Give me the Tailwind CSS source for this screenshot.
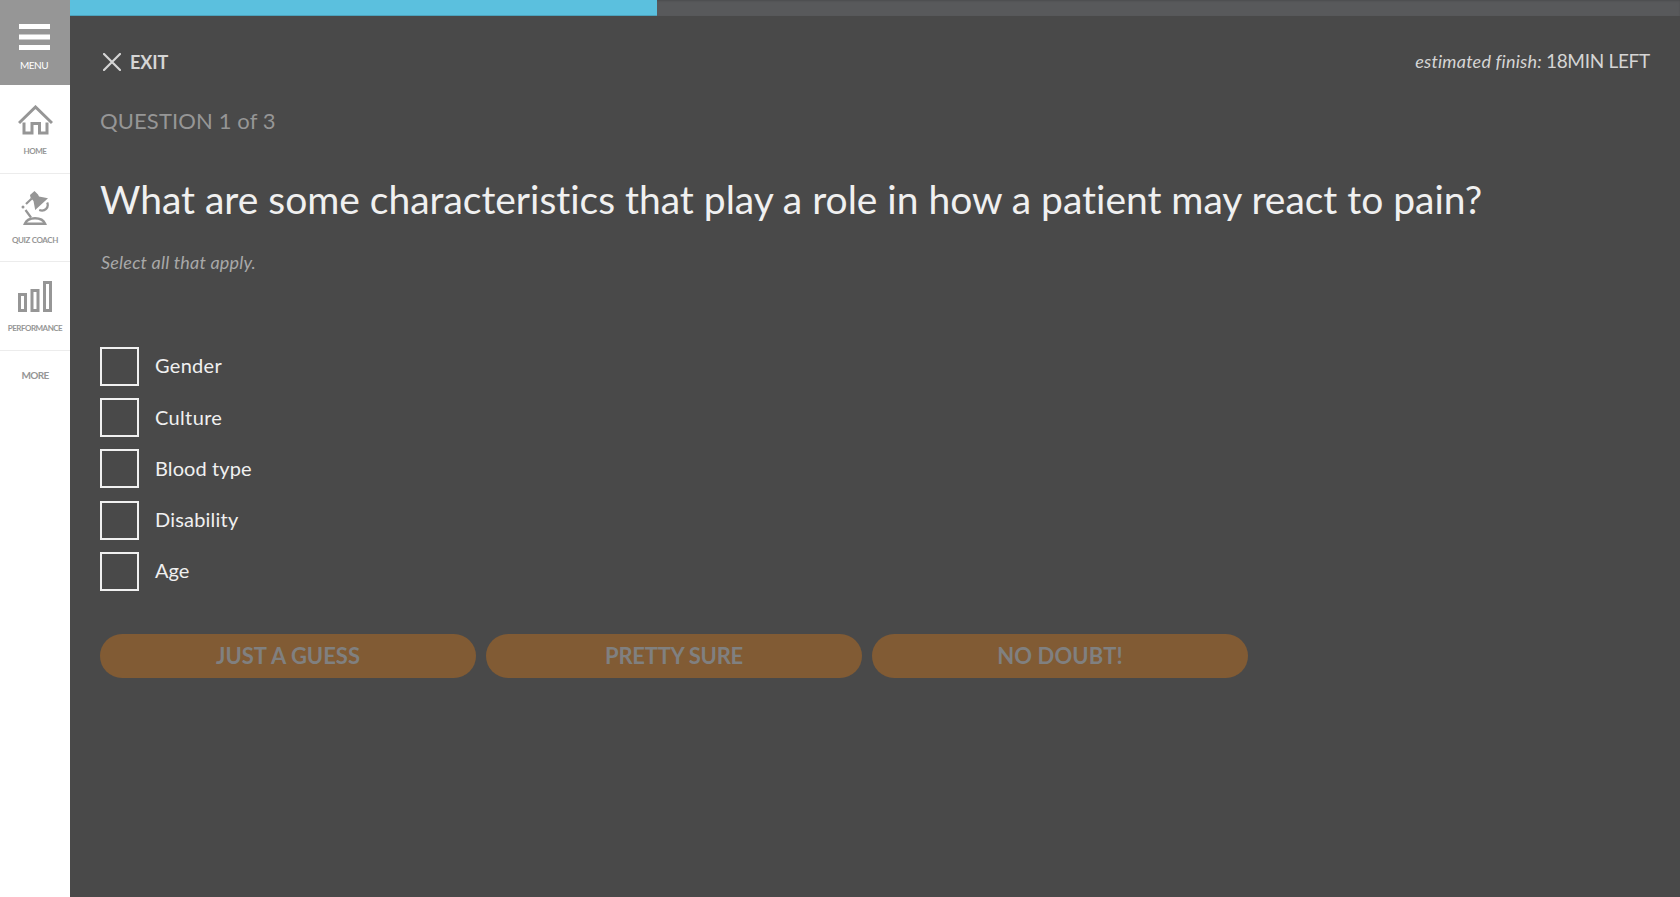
<!DOCTYPE html>
<html lang="en">
<head>
<meta charset="utf-8">
<title>Quiz</title>
<script src="https://cdn.jsdelivr.net/npm/@tailwindcss/browser@4"></script>
</head>
<body class="flex h-screen overflow-hidden bg-[#494949] font-['Lato',sans-serif] text-[#f0f0f0]">
  <nav class="flex w-[70px] shrink-0 flex-col bg-white text-center font-bold text-[#969696]">
    <a class="flex h-[85px] flex-col items-center bg-[#969696] pt-6 font-normal text-white">
      <svg class="-ml-px h-[26px] w-[31px]" viewBox="0 0 31 26" fill="currentColor"><path d="M0 0h31v5H0zM0 10.5h31v5H0zM0 21h31v5H0z"/></svg>
      <span class="-ml-0.5 mt-[9px] text-[10px] leading-3 tracking-[-0.5px]">MENU</span>
    </a>
    <a class="flex h-[89px] flex-col items-center border-b border-[#ececec] pt-5">
      <svg class="h-[30px] w-[35px]" viewBox="0 0 35 30" fill="none" stroke="currentColor" stroke-width="3"><path d="M1 18 17.5 2 34 18" /><path d="M6 17.5V28h8V18.500h7.500V28H29V17.500"/></svg>
      <span class="mt-[10px] text-[8px] leading-3 tracking-[-0.5px]">HOME</span>
    </a>
    <a class="flex h-[88px] flex-col items-center border-b border-[#ececec] pt-4">
      <svg class="h-[36px] w-[30px]" viewBox="0 0 30 36" fill="currentColor"><path d="M14.500 1 18 4.500 19 6.500 28 8.200 15.200 20 13.500 11 10.500 7.500 10 5z"/><g fill="none" stroke="currentColor" stroke-width="2.200"><path d="M11.800 8.500 6 14M5.500 20l5.500 7.500M27.200 12.500c2 5-2.200 9.500-8 7.500"/><path d="M5 33.700C8 26.500 22 26.500 25 33.700z" stroke-width="2.600"/></g><circle cx="3" cy="17" r="1.500"/></svg>
      <span class="mt-[8px] text-[8px] leading-3 tracking-[-0.38px]">QUIZ COACH</span>
    </a>
    <a class="flex h-[89px] flex-col items-center border-b border-[#ececec] pt-[19px]">
      <svg class="h-[31px] w-[34px]" viewBox="0 0 34 31" fill="none" stroke="currentColor" stroke-width="3"><path d="M1.500 13.500h6v16h-6zM14 9.500h6v20h-6zM26.500 1.500h6v28h-6z"/></svg>
      <span class="mt-[10px] text-[8px] leading-3 tracking-[-0.5px]">PERFORMANCE</span>
    </a>
    <a class="pt-[18px] text-[10px] leading-3 tracking-[-0.7px]">MORE</a>
  </nav>
  <main class="flex grow flex-col">
    <div class="h-4 bg-[#58595b] shadow-[inset_0_1px_2px_rgba(0,0,0,0.15)]">
      <div class="h-full w-[587px] bg-[#5bc0de] shadow-[inset_0_-1px_0_rgba(0,0,0,0.15)]"></div>
    </div>
    <div class="flex flex-col px-[30px]">
      <header class="mt-[34px] flex h-6 items-center justify-between text-[#d5d5d5]">
        <div class="flex items-center gap-[9px] pl-[3px]">
          <svg class="size-[18px]" viewBox="0 0 18 18" fill="none" stroke="currentColor" stroke-width="2.200" stroke-linecap="round"><path d="M1 1l16 16M17 1 1 17"/></svg>
          <span class="text-[18px] leading-6 font-bold tracking-[-0.1px]">EXIT</span>
        </div>
        <div class="flex items-baseline gap-1 pb-[2px] leading-6"><em class="text-[18px] tracking-[0.22px]">estimated finish:</em><span class="text-[19px] tracking-[-0.3px]">18MIN LEFT</span></div>
      </header>
      <div class="mt-[33px] text-[22px] leading-7 tracking-[0.12px] text-[#969696]">QUESTION 1 of 3</div>
      <h1 class="mt-10 text-[39px] leading-12 tracking-[-0.015px] whitespace-nowrap">What are some characteristics that play a role in how a patient may react to pain?</h1>
      <p class="mt-[27px] pl-px text-[18px] leading-6 tracking-[0.2px] text-[#a8a8a8] italic">Select all that apply.</p>
      <div class="mt-[73px] flex flex-col gap-[12.2px] text-[20px] leading-6">
        <label class="flex items-center gap-4"><span class="size-[39px] border-2 border-[#f0f0f0]"></span><span class="pb-[3px] tracking-[0.3px]">Gender</span></label>
        <label class="flex items-center gap-4"><span class="size-[39px] border-2 border-[#f0f0f0]"></span><span class="pb-[1.5px] tracking-[0.35px]">Culture</span></label>
        <label class="flex items-center gap-4"><span class="size-[39px] border-2 border-[#f0f0f0]"></span><span class="pb-[1.5px] tracking-[0.1px]">Blood type</span></label>
        <label class="flex items-center gap-4"><span class="size-[39px] border-2 border-[#f0f0f0]"></span><span class="pb-[3px] tracking-[0.2px]">Disability</span></label>
        <label class="flex items-center gap-4"><span class="size-[39px] border-2 border-[#f0f0f0]"></span><span class="pb-[3px]">Age</span></label>
      </div>
      <div class="mt-[43px] flex gap-2.5 text-[22px] leading-7 font-bold text-[#808080]">
        <button class="h-11 w-[376px] rounded-full bg-[#815b34]">JUST A GUESS</button>
        <button class="h-11 w-[376px] rounded-full bg-[#815b34] tracking-[-0.25px]">PRETTY SURE</button>
        <button class="h-11 w-[376px] rounded-full bg-[#815b34] tracking-[0.1px]">NO DOUBT!</button>
      </div>
    </div>
  </main>
</body>
</html>
